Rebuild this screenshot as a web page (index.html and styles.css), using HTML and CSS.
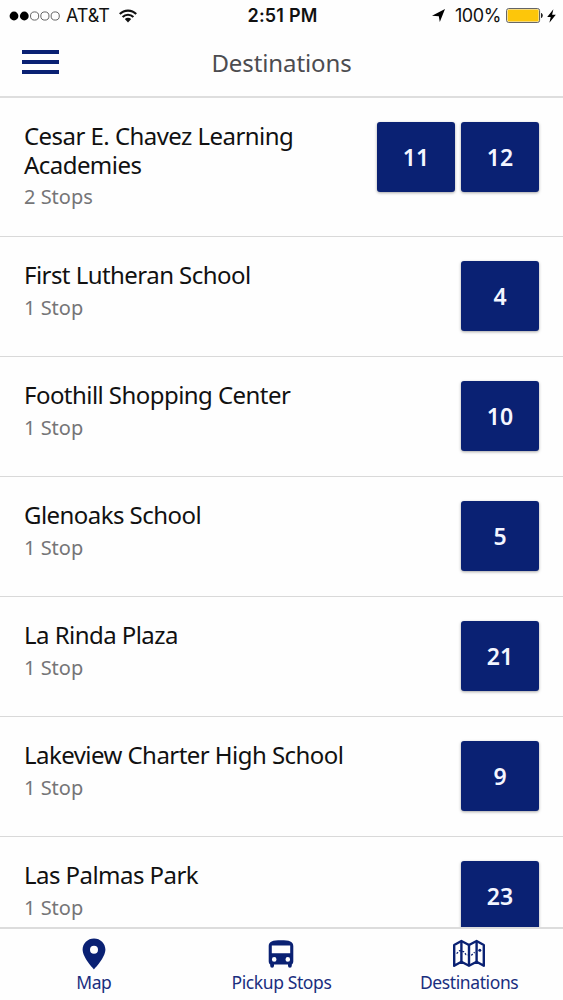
FILE: index.html
```html
<!DOCTYPE html>
<html lang="en">
<head>
<meta charset="UTF-8" />
<meta name="viewport" content="width=device-width, initial-scale=1.0"/>
<title>Destinations</title>
<link rel="stylesheet" href="styles.css">
</head>
<body>
<div class="app">

    <!-- status bar -->
    <div class="status">
        <div class="status-left">
            <svg class="signal" width="52" height="10" viewBox="0 0 52 10">
                <circle cx="5" cy="5" r="4.4" fill="#000"/>
                <circle cx="15.3" cy="5" r="4.4" fill="#000"/>
                <g fill="none" stroke="#555" stroke-width="0.9">
                    <circle cx="25.6" cy="5" r="4.1"/>
                    <circle cx="35.9" cy="5" r="4.1"/>
                    <circle cx="46.2" cy="5" r="4.1"/>
                </g>
            </svg>
            <span class="carrier">AT&amp;T</span>
            <svg class="wifi" width="18" height="14" viewBox="0 0 18 14">
                <g fill="none" stroke="#111" stroke-width="2.1">
                    <path d="M0.8 5.1C5.3 0.4 12.7 0.4 17.2 5.1"/>
                    <path d="M3.6 8.1C6.6 5 11.4 5 14.4 8.1"/>
                </g>
                <path d="M5.8 10.1C7.6 8.3 10.4 8.3 12.2 10.1L9 13.4Z" fill="#111"/>
            </svg>
        </div>
        <div class="time">2:51 PM</div>
        <div class="status-right">
            <svg class="arrow" width="13" height="13" viewBox="0 0 13 13">
                <path d="M13 0L7.8 13L6.8 7.2L0 6.8Z" fill="#000"/>
            </svg>
            <span class="percent">100%</span>
            <svg class="battery" width="38" height="15" viewBox="0 0 38 15">
                <rect x="0.6" y="0.6" width="33" height="13.8" rx="2" fill="#fff" stroke="#555" stroke-width="1"/>
                <rect x="1.6" y="1.6" width="31" height="11.8" rx="1" fill="#fdc60a"/>
                <path d="M35 5C37.4 5.6 37.4 9.4 35 10Z" fill="#222"/>
            </svg>
            <svg class="bolt" width="9" height="14" viewBox="0 0 9 14">
                <path d="M6.4 0.2L0.2 8H3.7L2.4 13.8L8.8 5.8H5.1Z" fill="#000"/>
            </svg>
        </div>
    </div>

    <!-- title bar -->
    <div class="header">
        <div class="menu">
            <span></span>
            <span></span>
            <span></span>
        </div>
        <h1>Destinations</h1>
    </div>

    <div class="list">
        <div class="row">
            <div class="info">
                <h2>Cesar E. Chavez Learning Academies</h2>
                <p>2 Stops</p>
            </div>
            <div class="stops"><a class="stop">11</a><a class="stop">12</a></div>
        </div>
        <div class="row">
            <div class="info">
                <h2>First Lutheran School</h2>
                <p>1 Stop</p>
            </div>
            <div class="stops"><a class="stop">4</a></div>
        </div>
        <div class="row">
            <div class="info">
                <h2>Foothill Shopping Center</h2>
                <p>1 Stop</p>
            </div>
            <div class="stops"><a class="stop">10</a></div>
        </div>
        <div class="row">
            <div class="info">
                <h2>Glenoaks School</h2>
                <p>1 Stop</p>
            </div>
            <div class="stops"><a class="stop">5</a></div>
        </div>
        <div class="row">
            <div class="info">
                <h2>La Rinda Plaza</h2>
                <p>1 Stop</p>
            </div>
            <div class="stops"><a class="stop">21</a></div>
        </div>
        <div class="row">
            <div class="info">
                <h2>Lakeview Charter High School</h2>
                <p>1 Stop</p>
            </div>
            <div class="stops"><a class="stop">9</a></div>
        </div>
        <div class="row">
            <div class="info">
                <h2>Las Palmas Park</h2>
                <p>1 Stop</p>
            </div>
            <div class="stops"><a class="stop">23</a></div>
        </div>
    </div>

    <!-- bottom tabs -->
    <div class="tabs">
        <a class="tab">
            <svg width="34" height="34" viewBox="0 0 34 34">
                <path fill-rule="evenodd" d="M17 1.4C10.6 1.4 5.6 6.3 5.6 12.6C5.6 20.9 17 32.4 17 32.4S28.4 20.9 28.4 12.6C28.4 6.3 23.4 1.4 17 1.4ZM17 8.7A4 4 0 1 1 17 16.7A4 4 0 1 1 17 8.7Z" fill="#0a2173"/>
            </svg>
            <span>Map</span>
        </a>
        <a class="tab">
            <svg width="34" height="34" viewBox="0 0 34 34">
                <path fill-rule="evenodd" d="M4.7 9C4.7 4.4 8.6 3.2 17 3.2S29.3 4.4 29.3 9V24.2C29.3 25.8 28.7 26.8 27.8 27.6V28.8A1.9 1.9 0 0 1 24 28.8V27.6H10V28.8A1.9 1.9 0 0 1 6.2 28.8V27.6C5.3 26.8 4.7 25.8 4.7 24.2ZM7.8 8.4V16.2H26.2V8.4ZM10.2 20.1A2.3 2.3 0 1 0 10.2 24.7A2.3 2.3 0 1 0 10.2 20.1ZM23.8 20.1A2.3 2.3 0 1 0 23.8 24.7A2.3 2.3 0 1 0 23.8 20.1Z" fill="#0a2173"/>
            </svg>
            <span>Pickup Stops</span>
        </a>
        <a class="tab">
            <svg width="34" height="34" viewBox="0 0 34 34">
                <g fill="none" stroke="#0a2173" stroke-width="2.4" stroke-linejoin="round">
                    <path d="M2.2 8L9.4 4L17 8L24.6 4L31.8 8V28.8L24.6 24.8L17 28.8L9.4 24.8L2.2 28.8Z"/>
                    <path d="M9.4 4V24.8M17 8V28.8M24.6 4V24.8"/>
                    <path d="M4.6 16.6L7.6 13.6L11.6 14.6L14 17.6L19.4 18.2L22.6 15.2" stroke-width="1.3" stroke-dasharray="2 1.5"/>
                </g>
                <circle cx="27.8" cy="13.2" r="1.5" fill="#0a2173"/>
            </svg>
            <span>Destinations</span>
        </a>
    </div>

</div>
</body>
</html>
```
FILE: styles.css
```css
body {
    font-family: "Noto Sans", sans-serif;
    background: #fefefe;
    color: #111;
    margin: 0;
}

.app {
    display: flex;
    flex-direction: column;
    height: 1000px;
    overflow: hidden;
}

/* status bar */
.status {
    display: grid;
    grid-template-columns: 1fr auto 1fr;
    align-items: center;
    height: 31px;
    padding: 0 7px 0 9px;
    font-family: Inter, sans-serif;
    font-size: 18px;
    line-height: 31px;
    flex-shrink: 0;
}

.status-left,
.status-right {
    display: flex;
    align-items: center;
}

.status-right {
    justify-content: flex-end;
}

.carrier {
    margin-left: 5px;
    letter-spacing: -0.1px;
}

.wifi {
    margin-left: 9px;
}

.time {
    font-weight: 600;
    letter-spacing: 0.2px;
}

.percent {
    margin: 0 5px 0 10px;
    letter-spacing: -0.4px;
}

.bolt {
    margin-left: 3px;
}

/* title bar */
.header {
    display: grid;
    grid-template-columns: 37px 1fr 37px;
    align-items: center;
    box-sizing: border-box;
    height: 67px;
    padding: 0 22px 3px;
    border-bottom: 2px solid #dedede;
    flex-shrink: 0;
}

.menu {
    display: flex;
    flex-direction: column;
    gap: 6px;
}

.menu span {
    height: 4px;
    background: #0a2173;
}

.header h1 {
    margin: 0;
    font-size: 24px;
    font-weight: 400;
    letter-spacing: -0.1px;
    color: #4c4c50;
    text-align: center;
}

/* destinations */
.list {
    flex: 1;
    min-height: 0;
    overflow: hidden;
}

.row {
    display: flex;
    justify-content: space-between;
    box-sizing: border-box;
    min-height: 120px;
    padding: 23px 24px 24px;
    border-bottom: 1px solid #d9d9d9;
}

.info {
    flex: 1;
}

.info h2 {
    margin: 0;
    padding-top: 1px;
    font-size: 24px;
    font-weight: 400;
    line-height: 28.5px;
    letter-spacing: -0.55px;
}

.info p {
    margin: 4px 0 1px;
    font-size: 20px;
    line-height: 28px;
    color: #757577;
}

.stops {
    display: flex;
    gap: 6px;
    padding-top: 1px;
}

.stop {
    width: 78px;
    height: 70px;
    border-radius: 3px;
    background: #0a2173;
    box-shadow: 0 1px 3px rgba(0, 0, 0, 0.35);
    color: #f4f6ff;
    font-size: 23px;
    font-weight: 600;
    line-height: 71px;
    text-align: center;
}

/* bottom tabs */
.tabs {
    display: grid;
    grid-template-columns: 1fr 1fr 1fr;
    height: 71px;
    border-top: 2px solid #dcdcdc;
    flex-shrink: 0;
}

.tab {
    display: flex;
    flex-direction: column;
    align-items: center;
    padding-top: 8px;
    color: #1a2e7e;
    font-size: 17.5px;
    line-height: 22px;
    letter-spacing: -0.4px;
}
```
